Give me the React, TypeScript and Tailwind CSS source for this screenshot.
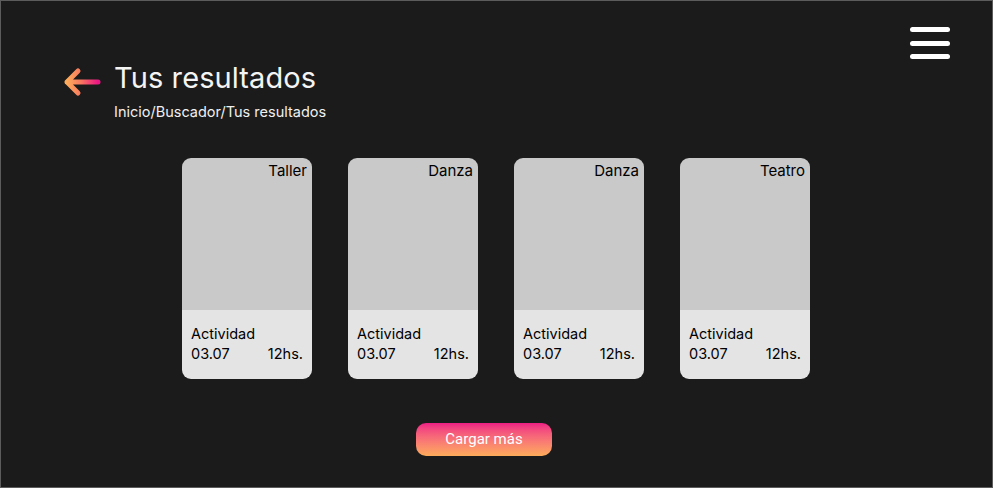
import React from "react";

interface IResult {
    category: string;
    title: string;
    date: string;
    hour: string;
}

const RESULTS: IResult[] = [
    { category: "Taller", title: "Actividad", date: "03.07", hour: "12hs." },
    { category: "Danza", title: "Actividad", date: "03.07", hour: "12hs." },
    { category: "Danza", title: "Actividad", date: "03.07", hour: "12hs." },
    { category: "Teatro", title: "Actividad", date: "03.07", hour: "12hs." },
];

const BackArrow = () => (
    <svg width="38" height="30" viewBox="0 0 38 30" className="mt-[7px] shrink-0">
        <defs>
            <linearGradient id="arrowGrad" x1="0" y1="0" x2="1" y2="0">
                <stop offset="0%" stopColor="#fdac5b" />
                <stop offset="45%" stopColor="#f9775f" />
                <stop offset="100%" stopColor="#ec1585" />
            </linearGradient>
        </defs>
        <path
            d="M35 15 H4 M15 4 L4 15 L15 26"
            fill="none"
            stroke="url(#arrowGrad)"
            strokeWidth="5"
            strokeLinecap="round"
            strokeLinejoin="round"
        />
    </svg>
);

const ResultCard = ({ item }: { item: IResult }) => {
    return (
        <div className="w-[130px] rounded-[9px] overflow-hidden flex flex-col">
            <div className="h-[152px] bg-[#c9c9c9] text-right pr-[5px] pt-[3px] text-[15px] leading-[20px] text-black">
                {item.category}
            </div>
            <div className="h-[69px] bg-[#e4e4e4] px-[9px] pt-[14px] text-[14.5px] leading-[20px] text-black">
                <div>{item.title}</div>
                <div className="flex justify-between">
                    <span>{item.date}</span>
                    <span>{item.hour}</span>
                </div>
            </div>
        </div>
    );
};

const App = () => {
    return (
        <div
            className="w-[993px] h-[488px] border border-[#5c5c5c] bg-[#1b1b1b] flex flex-col"
            style={{ fontFamily: "Inter, 'Noto Sans', sans-serif" }}
        >
            <div className="flex justify-end pt-[26px] pr-[42px]">
                <div className="flex flex-col gap-[8.5px] w-[40px]">
                    <div className="h-[5px] rounded-full bg-white" />
                    <div className="h-[5px] rounded-full bg-white" />
                    <div className="h-[5px] rounded-full bg-white" />
                </div>
            </div>

            <div className="flex items-start gap-[13px] pl-[62px] mt-[1px]">
                <BackArrow />
                <div className="flex flex-col">
                    <h1 className="text-[29px] leading-[36px] text-[#f4f4f4] tracking-[0.1px]">
                        Tus resultados
                    </h1>
                    <div className="text-[14.5px] leading-[20px] text-[#f0f0f0] mt-[6px]">
                        Inicio/Buscador/Tus resultados
                    </div>
                </div>
            </div>

            <div className="flex justify-center gap-[36px] mt-[36px] pr-[1px]">
                {RESULTS.map((item, idx) => (
                    <ResultCard key={idx} item={item} />
                ))}
            </div>

            <div className="flex pl-[415px] mt-[44px]">
                <button
                    className="w-[136px] h-[33px] rounded-[10px] bg-gradient-to-b from-[#ee1c84] to-[#fdab5a] text-white text-[15px]"
                    style={{ fontFamily: "Roboto, sans-serif" }}
                >
                    Cargar más
                </button>
            </div>
        </div>
    );
};

export default App;
